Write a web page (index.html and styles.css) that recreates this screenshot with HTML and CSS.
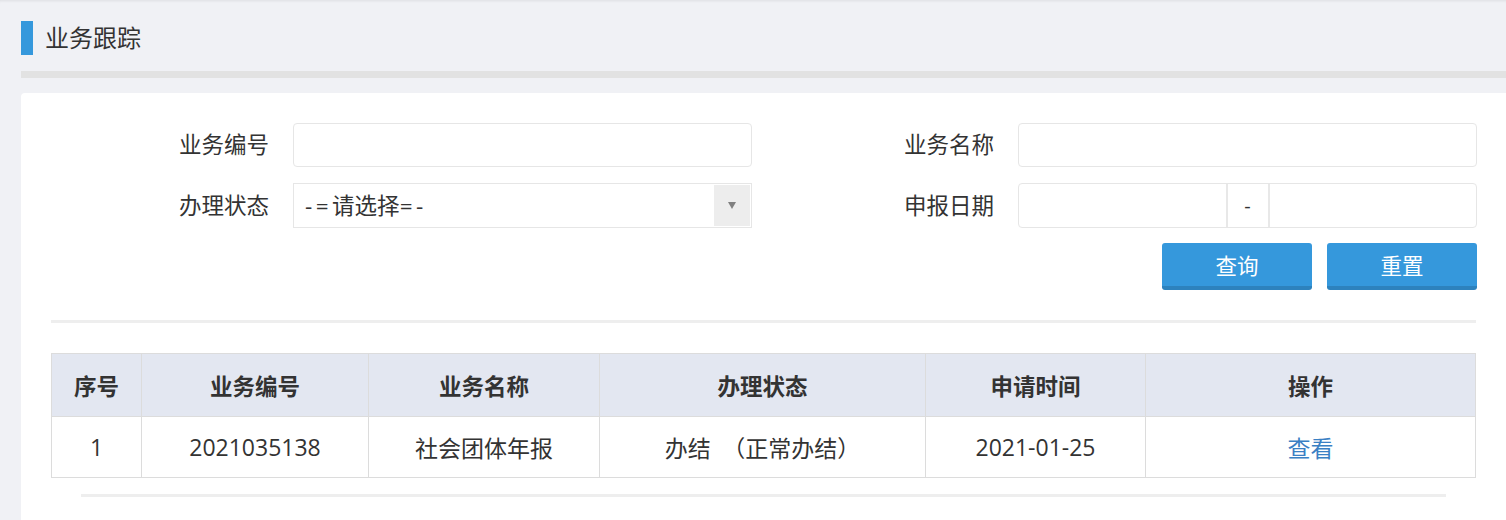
FILE: index.html
```html
<!DOCTYPE html>
<html lang="zh-CN">
<head>
<meta charset="utf-8">
<title>业务跟踪</title>
<link rel="stylesheet" href="styles.css">
</head>
<body>
<div class="page">
  <div class="title">
    <span class="title-mark"></span>
    <h1 class="title-text">业务跟踪</h1>
  </div>
  <div class="title-rule"></div>
  <div class="panel">
    <form class="search">
      <label class="lbl">业务编号</label>
      <input class="field" type="text">
      <label class="lbl">业务名称</label>
      <input class="field" type="text">
      <label class="lbl">办理状态</label>
      <div class="select">
        <span class="select-text"><span class="ascii">-=</span>请选择<span class="ascii">=-</span></span>
        <span class="select-arrow"><span class="tri"></span></span>
      </div>
      <label class="lbl">申报日期</label>
      <div class="range">
        <input class="range-in" type="text">
        <span class="range-sep">-</span>
        <input class="range-in" type="text">
      </div>
      <div class="actions">
        <button type="button" class="btn">查询</button>
        <button type="button" class="btn">重置</button>
      </div>
    </form>
    <div class="rule"></div>
    <table class="grid">
      <colgroup>
        <col class="c1"><col class="c2"><col class="c3"><col class="c4"><col class="c5"><col>
      </colgroup>
      <thead>
        <tr><th>序号</th><th>业务编号</th><th>业务名称</th><th>办理状态</th><th>申请时间</th><th>操作</th></tr>
      </thead>
      <tbody>
        <tr><td>1</td><td>2021035138</td><td>社会团体年报</td><td>办结&ensp;（正常办结）</td><td>2021-01-25</td><td><a class="link" href="#">查看</a></td></tr>
      </tbody>
    </table>
    <div class="rule rule-bottom"></div>
  </div>
</div>
</body>
</html>
```

FILE: styles.css
```css
html, body {
  margin: 0;
  padding: 0;
  background: #f0f1f5;
}
body {
  font-family: "Open Sans", "Noto Sans CJK SC", sans-serif;
  color: #333;
}
.page {
  height: 520px;
  overflow: hidden;
  padding: 21px 0 0 21px;
  box-sizing: border-box;
  box-shadow: inset 0 3px 3px -2px rgba(0,0,0,0.08);
}
.title {
  display: flex;
  align-items: center;
  height: 34px;
  gap: 12px;
}
.title-mark {
  width: 12px;
  height: 34px;
  background: #3598dc;
}
.title-text {
  margin: 0;
  font-size: 24px;
  font-weight: normal;
  line-height: 34px;
  color: #333;
}
.title-rule {
  margin-top: 16px;
  height: 7px;
  background: #e2e2e2;
}
.panel {
  margin-top: 15px;
  background: #fff;
  border-radius: 4px 0 0 0;
  padding: 30px 30px 24px 30px;
}
.search {
  display: grid;
  grid-template-columns: 218px 459px 218px 459px;
  column-gap: 24px;
  row-gap: 16px;
  align-items: center;
}
.lbl {
  text-align: right;
  font-size: 22.5px;
  color: #333;
  line-height: 30px;
}
.field {
  box-sizing: border-box;
  height: 44px;
  width: 100%;
  border: 1px solid #e6e6e6;
  border-radius: 4px;
  padding: 0 10px;
  font: inherit;
  font-size: 20px;
  outline: none;
}
.select {
  box-sizing: border-box;
  height: 45px;
  border: 1px solid #e6e6e6;
  display: flex;
  align-items: stretch;
  padding: 1px;
}
.select-text {
  flex: 1;
  padding-left: 10px;
  font-size: 22.5px;
  line-height: 41px;
  color: #333;
}
.ascii {
  letter-spacing: 3.5px;
}
.select-arrow {
  width: 36px;
  background: #ededed;
  display: flex;
  align-items: center;
  justify-content: center;
}
.tri {
  width: 0;
  height: 0;
  border-left: 4px solid transparent;
  border-right: 4px solid transparent;
  border-top: 7px solid #808080;
}
.range {
  box-sizing: border-box;
  height: 45px;
  display: flex;
  border: 1px solid #e6e6e6;
  border-radius: 4px;
}
.range-in {
  flex: 1;
  min-width: 0;
  border: 0;
  background: transparent;
  outline: none;
  font: inherit;
}
.range-sep {
  width: 40px;
  border-left: 2px solid #e8e8e8;
  border-right: 2px solid #e8e8e8;
  text-align: center;
  font-size: 20px;
  line-height: 43px;
  color: #333;
}
.actions {
  grid-column: 1 / -1;
  display: flex;
  justify-content: flex-end;
  gap: 15px;
  margin-top: -1px;
}
.btn {
  box-sizing: border-box;
  width: 150px;
  height: 47px;
  border: 0;
  border-bottom: 4px solid #2d82bd;
  border-radius: 3px;
  background: #3598dc;
  color: #fff;
  font-family: "Noto Sans CJK SC", sans-serif;
  font-size: 21.5px;
  padding: 0;
  cursor: pointer;
}
.rule {
  height: 3px;
  background: #eeeeee;
  margin-top: 30px;
}
.grid {
  margin-top: 30px;
  width: 1425px;
  border-collapse: collapse;
  table-layout: fixed;
  font-size: 23px;
}
.c1 { width: 90px; }
.c2 { width: 227px; }
.c3 { width: 231px; }
.c4 { width: 326px; }
.c5 { width: 220px; }
.grid th, .grid td {
  border: 1px solid #dcdcdc;
  text-align: center;
  padding: 0;
}
.grid th {
  height: 62px;
  background: #e3e7f1;
  font-weight: bold;
  font-size: 22.5px;
  color: #333;
}
.grid td {
  height: 60px;
  color: #333;
}
.link {
  color: #3a80c4;
  text-decoration: none;
}
.rule-bottom {
  margin: 16px 30px 0 30px;
}
```
